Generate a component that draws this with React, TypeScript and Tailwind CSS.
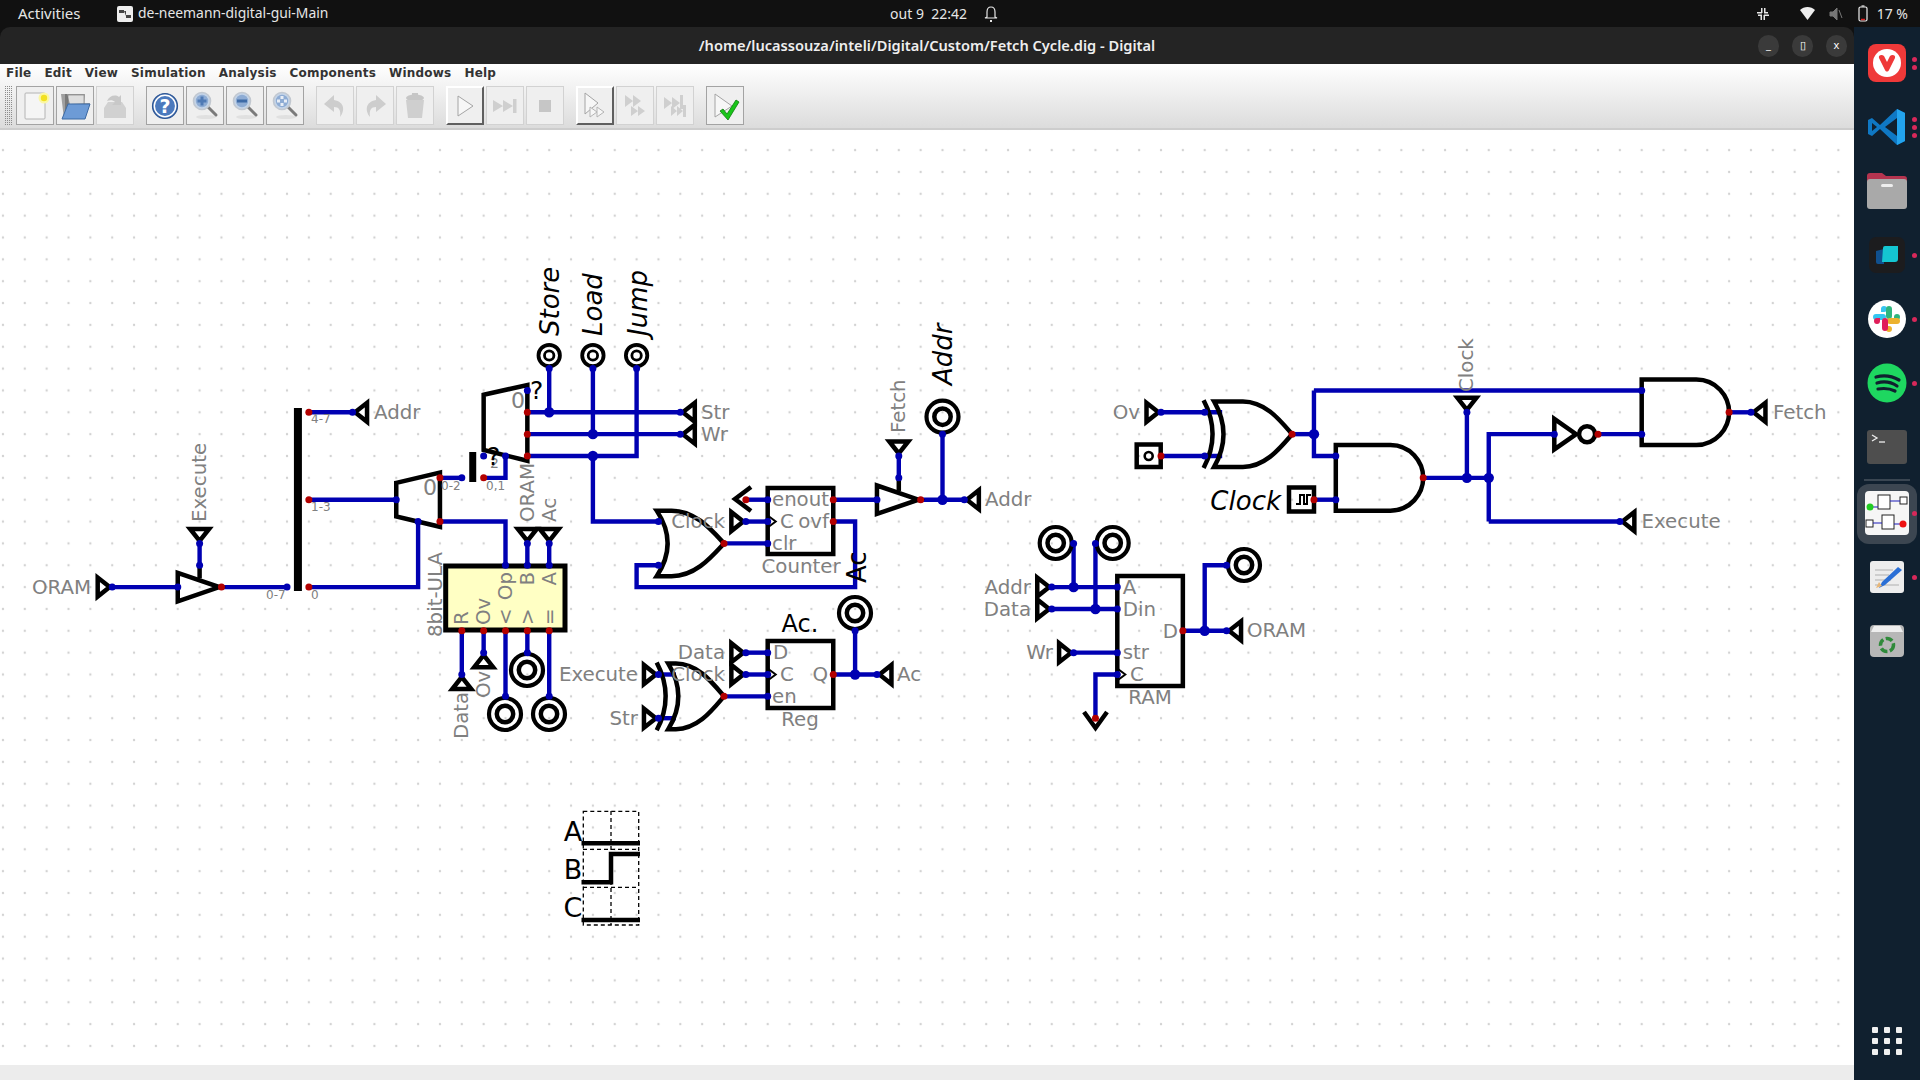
import React from "react";

const G = 21.85;
const X = (c: number) => 767.7 + G * c;
const Y = (r: number) => 412.3 + G * r;
const BLUE = "#0000b2";
const RED = "#b20000";
const GRAY = "#808080";

// wires in grid units
const wires: number[][][] = [
  [[-30, 8], [-27, 8]],
  [[-26, 7], [-26, 6]],
  [[-25, 8], [-22, 8]],
  [[-21, 0], [-19, 0]],
  [[-21, 4], [-17, 4]],
  [[-21, 8], [-16, 8], [-16, 5]],
  [[-15, 3], [-14, 3]],
  [[-13, 3], [-12, 3], [-12, 2]],
  [[-15, 5], [-12, 5], [-12, 7]],
  [[-11, 6], [-11, 7]],
  [[-10, 6], [-10, 7]],
  [[-14, 10], [-14, 12]],
  [[-13, 10], [-13, 11]],
  [[-12, 10], [-12, 13]],
  [[-11, 10], [-11, 11]],
  [[-10, 10], [-10, 13]],
  [[-11, 0], [-4, 0]],
  [[-11, 1], [-4, 1]],
  [[-11, 2], [-6, 2], [-6, -2]],
  [[-10, -2], [-10, 0]],
  [[-8, -2], [-8, 1]],
  [[-8, 2], [-8, 5], [-5, 5]],
  [[-5, 7], [-6, 7], [-6, 8], [4, 8], [4, 5], [3, 5]],
  [[-1, 4], [0, 4]],
  [[-1, 5], [0, 5]],
  [[-2, 6], [0, 6]],
  [[3, 4], [5, 4]],
  [[6, 2], [6, 3]],
  [[7, 4], [9, 4]],
  [[8, 1], [8, 4]],
  [[-1, 11], [0, 11]],
  [[-1, 12], [0, 12]],
  [[-5, 12], [-4.2, 12]],
  [[-5, 14], [-4.2, 14]],
  [[-2, 13], [0, 13]],
  [[3, 12], [5, 12]],
  [[4, 10], [4, 12]],
  [[18, 0], [20.8, 0]],
  [[18, 2], [20.8, 2]],
  [[24, 1], [25, 1]],
  [[25, -1], [25, 2], [26, 2]],
  [[25, -1], [40, -1]],
  [[25, 4], [26, 4]],
  [[30, 3], [33, 3]],
  [[32, 0], [32, 3]],
  [[33, 5], [33, 1], [36, 1]],
  [[33, 5], [39, 5]],
  [[38, 1], [40, 1]],
  [[44, 0], [45, 0]],
  [[13, 8], [16, 8]],
  [[13, 9], [16, 9]],
  [[14, 11], [16, 11]],
  [[14, 6], [14, 8]],
  [[15, 6], [15, 9]],
  [[16, 12], [15, 12], [15, 14]],
  [[19, 10], [21, 10]],
  [[20, 10], [20, 7], [21, 7]],
];

const bluePins = [
  [-30, 8], [-27, 8], [-26, 7], [-26, 6], [-22, 8], [-19, 0], [-17, 4], [-16, 5], [-14, 3], [-13, 2], [-12, 2], [-12, 7], [-11, 7], [-10, 7], [-11, 6], [-10, 6],
  [-14, 12], [-13, 11], [-12, 13], [-11, 11], [-10, 13], [-11, -1], [-10, -2], [-8, -2], [-6, -2], [-4, 0], [-4, 1], [-5, 5], [-5, 7], [-1, 5], [0, 4], [0, 5], [0, 6],
  [5, 4], [6, 3], [6, 2], [9, 4], [8, 1], [-1, 11], [-1, 12], [0, 11], [0, 12], [0, 13], [-5, 12], [-5, 14], [5, 12], [4, 10],
  [18, 0], [20, 0], [20, 2], [26, 2], [26, 4], [32, 0], [36, 1], [39, 5], [40, -1], [40, 1], [45, 0],
  [13, 8], [13, 9], [14, 11], [16, 8], [16, 9], [16, 11], [16, 12], [14, 6], [15, 6], [21, 10], [21, 7],
];
const redPins = [
  [-25, 8], [-21, 0], [-21, 4], [-21, 8], [-15, 3], [-15, 5], [-13, 3], [-11, 0], [-11, 1], [-11, 2],
  [-14, 10], [-13, 10], [-12, 10], [-11, 10], [-10, 10], [-1, 4], [-2, 6], [3, 4], [3, 5], [7, 4], [-2, 13], [3, 12],
  [18, 2], [24, 1], [25, 4], [30, 3], [38, 1], [44, 0], [15, 14], [19, 10],
];
const junctions = [[-10, 0], [-8, 1], [-8, 2], [8, 4], [4, 12], [25, 1], [32, 3], [33, 3], [14, 8], [15, 9], [20, 10]];

type Dir = "r" | "l" | "d" | "u";
const tris: [number, number, Dir][] = [
  [-30, 8, "r"], [-26, 6, "d"], [-19, 0, "l"], [-11, 6, "d"], [-10, 6, "d"], [-14, 12, "u"], [-13, 11, "u"],
  [-4, 0, "l"], [-4, 1, "l"], [-1, 5, "r"], [6, 2, "d"], [9, 4, "l"], [-1, 11, "r"], [-1, 12, "r"], [-5, 12, "r"], [-5, 14, "r"], [5, 12, "l"],
  [18, 0, "r"], [32, 0, "d"], [39, 5, "l"], [45, 0, "l"], [13, 8, "r"], [13, 9, "r"], [14, 11, "r"], [21, 10, "l"],
];

function triPoints(c: number, r: number, d: Dir) {
  const x = X(c), y = Y(r);
  const a = 2.5, b = 14.5, h = 9.5;
  const pts: Record<Dir, number[][]> = {
    r: [[x - a, y], [x - b, y - h], [x - b, y + h]],
    l: [[x + a, y], [x + b, y - h], [x + b, y + h]],
    d: [[x, y - a], [x - h, y - b], [x + h, y - b]],
    u: [[x, y + a], [x - h, y + b], [x + h, y + b]],
  };
  return pts[d].map((p) => p.join(",")).join(" ");
}

// or-shaped body, grid units
function orPath(left: number, flat: number, tip: number, r: number, sag: number) {
  const w = tip - flat;
  return `M${X(left)} ${Y(r - 1.5)} L${X(flat)} ${Y(r - 1.5)} C${X(flat + w * 0.45)} ${Y(r - 1.5)} ${X(tip - w * 0.25)} ${Y(r - 0.65)} ${X(tip)} ${Y(r)} C${X(tip - w * 0.25)} ${Y(r + 0.65)} ${X(flat + w * 0.45)} ${Y(r + 1.5)} ${X(flat)} ${Y(r + 1.5)} L${X(left)} ${Y(r + 1.5)} Q${X(left + sag * 2)} ${Y(r)} ${X(left)} ${Y(r - 1.5)} Z`;
}
function backArc(left: number, r: number, sag: number) {
  return `M${X(left)} ${Y(r - 1.55)} Q${X(left + sag * 2)} ${Y(r)} ${X(left)} ${Y(r + 1.55)}`;
}
function andPath(c: number, r: number) {
  return `M${X(c)} ${Y(r - 1.5)} L${X(c + 2.5)} ${Y(r - 1.5)} C${X(c + 3.4)} ${Y(r - 1.5)} ${X(c + 4)} ${Y(r - 0.75)} ${X(c + 4)} ${Y(r)} C${X(c + 4)} ${Y(r + 0.75)} ${X(c + 3.4)} ${Y(r + 1.5)} ${X(c + 2.5)} ${Y(r + 1.5)} L${X(c)} ${Y(r + 1.5)} Z`;
}
const poly = (pts: number[][]) => pts.map(([c, r]) => `${X(c)},${Y(r)}`).join(" ");

type Lb = { t: string; x: number; y: number; a?: "start" | "middle" | "end"; rot?: boolean; s?: number; c?: string; i?: boolean };
const labels: Lb[] = [
  { t: "ORAM", x: 91, y: 587, a: "end" },
  { t: "Addr", x: 374, y: 412 },
  { t: "Execute", x: 199.6, y: 522, rot: true },
  { t: "ORAM", x: 527, y: 522, rot: true },
  { t: "Ac", x: 549, y: 522, rot: true },
  { t: "8bit-ULA", x: 435, y: 637, rot: true },
  { t: "Op", x: 505, y: 572, rot: true, a: "end" },
  { t: "B", x: 527, y: 572, rot: true, a: "end" },
  { t: "A", x: 549, y: 572, rot: true, a: "end" },
  { t: "R", x: 461, y: 625, rot: true },
  { t: "Ov", x: 483.5, y: 625, rot: true },
  { t: "<", x: 505, y: 625, rot: true },
  { t: ">", x: 527, y: 625, rot: true },
  { t: "=", x: 549, y: 625, rot: true },
  { t: "Data", x: 461, y: 739, rot: true },
  { t: "Ov", x: 483.5, y: 698, rot: true },
  { t: "Execute", x: 638, y: 674, a: "end" },
  { t: "Str", x: 638, y: 718, a: "end" },
  { t: "Data", x: 725, y: 652, a: "end" },
  { t: "Clock", x: 725, y: 674, a: "end" },
  { t: "Clock", x: 725, y: 521, a: "end" },
  { t: "en", x: 772, y: 499 },
  { t: "out", x: 829, y: 499, a: "end" },
  { t: "C", x: 780, y: 521 },
  { t: "ovf", x: 829, y: 521, a: "end" },
  { t: "clr", x: 772, y: 543 },
  { t: "Counter", x: 801, y: 566, a: "middle" },
  { t: "D", x: 773, y: 652 },
  { t: "C", x: 780, y: 674 },
  { t: "en", x: 772, y: 696 },
  { t: "Q", x: 828, y: 674, a: "end" },
  { t: "Reg", x: 800, y: 719, a: "middle" },
  { t: "Str", x: 701, y: 412 },
  { t: "Wr", x: 701, y: 434 },
  { t: "Addr", x: 985, y: 499 },
  { t: "Ac", x: 897, y: 674 },
  { t: "Fetch", x: 898, y: 433, rot: true },
  { t: "Ov", x: 1140, y: 412, a: "end" },
  { t: "Addr", x: 1031, y: 587, a: "end" },
  { t: "Data", x: 1031, y: 609, a: "end" },
  { t: "Wr", x: 1053, y: 652, a: "end" },
  { t: "A", x: 1122.7, y: 587 },
  { t: "Din", x: 1122.7, y: 609 },
  { t: "str", x: 1122.7, y: 652 },
  { t: "C", x: 1130, y: 674 },
  { t: "D", x: 1178, y: 631, a: "end" },
  { t: "RAM", x: 1150, y: 697, a: "middle" },
  { t: "ORAM", x: 1247, y: 630 },
  { t: "Fetch", x: 1773, y: 412 },
  { t: "Execute", x: 1641.5, y: 521 },
  { t: "Clock", x: 1466, y: 392, rot: true },
  { t: "0", x: 430, y: 487, a: "middle", s: 22 },
  { t: "0", x: 518, y: 400, a: "middle", s: 22 },
  { t: "2", x: 490, y: 463, s: 14 },
  { t: "0-2", x: 441, y: 486, s: 12 },
  { t: "0,1", x: 486, y: 486, s: 12 },
  { t: "4-7", x: 311, y: 419, s: 12 },
  { t: "1-3", x: 311, y: 507, s: 12 },
  { t: "0-7", x: 266, y: 595, s: 12 },
  { t: "0", x: 311, y: 595, s: 12 },
  // black labels
  { t: "Store", x: 550, y: 336, rot: true, s: 26, c: "#000", i: true },
  { t: "Load", x: 592.5, y: 336, rot: true, s: 26, c: "#000", i: true },
  { t: "Jump", x: 638, y: 336, rot: true, s: 26, c: "#000", i: true },
  { t: "Addr", x: 943, y: 385, rot: true, s: 26, c: "#000", i: true },
  { t: "Clock", x: 1281, y: 501, a: "end", s: 26, c: "#000", i: true },
  { t: "Ac", x: 856.7, y: 583, rot: true, s: 26, c: "#000" },
  { t: "Ac.", x: 800, y: 624, a: "middle", s: 24, c: "#000" },
  { t: "?", x: 530, y: 390, s: 25, c: "#000" },
  { t: "?", x: 487, y: 456, s: 25, c: "#000" },
  { t: "A", x: 573, y: 831, a: "middle", s: 27, c: "#000" },
  { t: "B", x: 573, y: 869, a: "middle", s: 27, c: "#000" },
  { t: "C", x: 573, y: 907, a: "middle", s: 27, c: "#000" },
];

const smallProbes = [[-10, -2.6], [-8, -2.6], [-6, -2.6]];
const bigProbes: number[][] = [[942.5, 416.7], [855, 613], [505, 714], [527, 670], [549, 714], [1055.7, 543], [1112.7, 543], [1244, 565]];

function Circuit() {
  return (
    <svg viewBox="0 130 1854 935" className="absolute inset-0 h-full w-full" style={{ fontFamily: '"DejaVu Sans", sans-serif' }}>
      <defs>
        <pattern id="griddots" patternUnits="userSpaceOnUse" x={X(0) - 2} y={Y(0) - 2} width={G} height={G}>
          <circle cx="2" cy="2" r="1.2" fill="#d2d2d2" />
        </pattern>
      </defs>
      <rect x="0" y="130" width="1854" height="935" fill="url(#griddots)" />

      {/* yellow alu body */}
      <rect x={445.7} y={566} width={119.3} height={64} fill="#ffffc4" stroke="#000" strokeWidth="5" />

      {/* wires */}
      <g fill="none" stroke={BLUE} strokeWidth="4.4">
        {wires.map((w, i) => (
          <polyline key={i} points={poly(w)} />
        ))}
      </g>

      <g fill="none" stroke="#000" strokeWidth="4.5">
        {/* splitters */}
        <line x1={X(-21.5)} y1={408} x2={X(-21.5)} y2={591} strokeWidth="8" />
        <line x1={X(-13.5)} y1={452} x2={X(-13.5)} y2={482} strokeWidth="7" />
        {/* mux and demux */}
        <polygon points={poly([[-17, 3.23], [-15, 2.76], [-15, 5.24], [-17, 4.77]])} />
        <polygon points={poly([[-13, -0.8], [-11, -1.25], [-11, 2.22], [-13, 1.72]])} />
        {/* drivers */}
        <polygon points={poly([[-27, 7.35], [-25.1, 8], [-27, 8.65]])} />
        <line x1={X(-26)} y1={Y(7)} x2={X(-26)} y2={Y(7.6)} />
        <polygon points={poly([[5, 3.35], [6.9, 4], [5, 4.65]])} />
        <line x1={X(6)} y1={Y(3)} x2={X(6)} y2={Y(3.6)} />
        {/* gates */}
        <path d={orPath(-5.08, -4.4, -2, 6, 0.5)} />
        <path d={orPath(-4.55, -4.2, -2, 13, 0.46)} />
        <path d={backArc(-5.08, 13, 0.41)} />
        <path d={orPath(20.43, 21.75, 24, 1, 0.43)} />
        <path d={backArc(19.95, 1, 0.41)} />
        <path d={andPath(26, 3)} />
        <path d={andPath(40, 0)} />
        {/* not */}
        <polygon points={poly([[36, 0.3], [37, 1], [36, 1.7]])} />
        <circle cx={X(37.5)} cy={Y(1)} r="8" />
        {/* boxes */}
        <rect x={X(0)} y={488} width={X(3) - X(0)} height={66} />
        <rect x={X(0)} y={641} width={X(3) - X(0)} height={67} />
        <rect x={X(16)} y={576} width={X(19) - X(16)} height={110} />
        <rect x={1136.7} y={444.5} width={24} height={22.5} />
        <rect x={1289} y={487.5} width={25} height={24} />
        {/* tunnels */}
        <polyline points={`751,487 735,499 751,511`} />
        <polyline points={`1084,712 1095.5,728 1107,712`} />
        {tris.map(([c, r, d], i) => (
          <polygon key={i} points={triPoints(c, r, d)} />
        ))}
        {smallProbes.map(([c, r], i) => (
          <g key={i}>
            <circle cx={X(c)} cy={Y(r)} r="10.7" strokeWidth="3.8" />
            <circle cx={X(c)} cy={Y(r)} r="4.7" strokeWidth="2.8" />
          </g>
        ))}
        {bigProbes.map(([x, y], i) => (
          <g key={i}>
            <circle cx={x} cy={y} r="16" strokeWidth="4.2" />
            <circle cx={x} cy={y} r="8.2" strokeWidth="4.5" />
          </g>
        ))}
        <circle cx={1148.7} cy={456} r="4" strokeWidth="2.6" />
        <polyline points="1296,504 1300,504 1300,495 1304,495 1304,504 1307,504 1307,495 1311,495" strokeWidth="2" />
        {/* clock notches */}
        <g strokeWidth="2">
          <polyline points={`${X(0)},${Y(5) - 6} ${X(0) + 8},${Y(5)} ${X(0)},${Y(5) + 6}`} />
          <polyline points={`${X(0)},${Y(12) - 6} ${X(0) + 8},${Y(12)} ${X(0)},${Y(12) + 6}`} />
          <polyline points={`${X(16)},${Y(12) - 6} ${X(16) + 8},${Y(12)} ${X(16)},${Y(12) + 6}`} />
        </g>
      </g>

      {/* pins */}
      {bluePins.map(([c, r], i) => (
        <circle key={i} cx={X(c)} cy={Y(r)} r="3.5" fill={BLUE} />
      ))}
      {redPins.map(([c, r], i) => (
        <circle key={i} cx={X(c)} cy={Y(r)} r="3.5" fill={RED} />
      ))}
      {junctions.map(([c, r], i) => (
        <circle key={i} cx={X(c)} cy={Y(r)} r="5.2" fill={BLUE} />
      ))}

      {/* measurement graph */}
      <g fill="none" stroke="#000" strokeWidth="1.3" strokeDasharray="4 3">
        <rect x={583.3} y={811.3} width={55.4} height={113.7} />
        <line x1={611} y1={811} x2={611} y2={925} />
        <line x1={583} y1={849.3} x2={639} y2={849.3} />
        <line x1={583} y1={887.3} x2={639} y2={887.3} />
      </g>
      <g fill="none" stroke="#000" strokeWidth="4.5">
        <line x1={581.5} y1={843.3} x2={640} y2={843.3} />
        <polyline points="581.5,882.3 611,882.3 611,854 640,854" />
        <line x1={581.5} y1={920} x2={640} y2={920} />
      </g>

      {labels.map((l, i) => (
        <text
          key={i}
          x={l.x}
          y={l.y}
          textAnchor={l.a ?? "start"}
          dominantBaseline="central"
          fontSize={l.s ?? 19.8}
          fill={l.c ?? GRAY}
          fontStyle={l.i ? "oblique" : "normal"}
          transform={l.rot ? `rotate(-90 ${l.x} ${l.y})` : undefined}
        >
          {l.t}
        </text>
      ))}
    </svg>
  );
}

function ToolButton({ off, raised, children }: { off?: boolean; raised?: boolean; children: React.ReactNode }) {
  return (
    <div
      className={
        raised
          ? "flex h-[39px] w-[38px] items-center justify-center border-2 border-t-white border-l-white border-r-[#5f5f5f] border-b-[#5f5f5f] bg-[#efefef]"
          : off
            ? "flex h-[39px] w-[38px] items-center justify-center border border-[#d2d2d2] bg-[#efefef]"
            : "flex h-[39px] w-[38px] items-center justify-center border border-[#a3a3a3] bg-[#efefef]"
      }
    >
      {children}
    </div>
  );
}

const Ico = ({ children }: { children: React.ReactNode }) => (
  <svg width="32" height="32" viewBox="0 0 32 32">
    {children}
  </svg>
);

const Magnifier = ({ kind }: { kind: "plus" | "minus" | "fit" }) => (
  <Ico>
    <ellipse cx="17" cy="27" rx="10" ry="2" fill="#e0e0e0" />
    <line x1="19" y1="17" x2="27" y2="25" stroke="#7a7a7a" strokeWidth="3" strokeLinecap="round" />
    <circle cx="13" cy="11" r="8.5" fill="#c4d4e8" stroke="#c2c8d0" strokeWidth="1.6" />
    <circle cx="13" cy="11" r="6.2" fill="#8eacd4" />
    {kind === "plus" && <path d="M13 6.5v9M8.5 11h9" stroke="#4f7ab5" strokeWidth="3" />}
    {kind === "minus" && <path d="M8 11h10" stroke="#3d6aa6" strokeWidth="3" />}
    {kind === "fit" && <path d="M13 6v3M13 13v3M8 11h3M15 11h3" stroke="#e8eef6" strokeWidth="3" />}
  </Ico>
);

function Toolbar() {
  return (
    <div className="flex items-center pl-[5px]">
      <svg width="8" height="39" className="mr-[3px]">
        <defs>
          <pattern id="grip" patternUnits="userSpaceOnUse" width="2" height="2">
            <rect width="1" height="1" fill="#8c8c8c" />
          </pattern>
        </defs>
        <rect width="8" height="39" fill="url(#grip)" />
      </svg>
      <div className="flex gap-[2px]">
        <ToolButton>
          <Ico>
            <rect x="6" y="3" width="20" height="26" rx="1" fill="#f5f5f5" stroke="#b4b4b4" />
            <circle cx="25" cy="8" r="5.5" fill="#fbf7a2" />
            <circle cx="25" cy="8" r="3.2" fill="#f2e020" />
          </Ico>
        </ToolButton>
        <ToolButton>
          <Ico>
            <path d="M6 4h20l-1 16H6z" fill="#9a9a9a" />
            <path d="M9 5h16v12H9z" fill="#dedede" stroke="#888" strokeWidth="0.7" />
            <path d="M2 4h6l3 10 20-1-5 16H5z" fill="#5e5e5e" opacity="0.55" />
            <path d="M9 14h22l-5 15H3z" fill="#6d9bd6" stroke="#3d6aa4" />
          </Ico>
        </ToolButton>
        <ToolButton off>
          <Ico>
            <path d="M5 18l4-6h14l4 6v10H5z" fill="#d1d1d1" />
            <path d="M8 11c2-5 8-7 12-4l2-2v10h-9l3-3c-2-2-5-2-8-1z" fill="#c8c8c8" />
          </Ico>
        </ToolButton>
      </div>
      <div className="ml-[12px] flex gap-[2px]">
        <ToolButton>
          <Ico>
            <circle cx="16" cy="16" r="12.5" fill="#3c68ad" stroke="#2b5594" strokeWidth="1.2" />
            <circle cx="16" cy="16" r="10.7" fill="#4a79bd" stroke="#fff" strokeWidth="1.5" />
            <text x="16" y="23" textAnchor="middle" fontSize="19" fontWeight="700" fill="#fff" fontFamily='"DejaVu Sans", sans-serif'>
              ?
            </text>
          </Ico>
        </ToolButton>
        <ToolButton>
          <Magnifier kind="plus" />
        </ToolButton>
        <ToolButton>
          <Magnifier kind="minus" />
        </ToolButton>
        <ToolButton>
          <Magnifier kind="fit" />
        </ToolButton>
      </div>
      <div className="ml-[12px] flex gap-[2px]">
        <ToolButton off>
          <Ico>
            <path d="M15 5L5 14l10 8v-5c5 0 7 3 6 10 5-6 5-15-6-17z" fill="#cdcdcd" />
          </Ico>
        </ToolButton>
        <ToolButton off>
          <Ico>
            <path d="M17 5l10 9-10 8v-5c-5 0-7 3-6 10-5-6-5-15 6-17z" fill="#cdcdcd" />
          </Ico>
        </ToolButton>
        <ToolButton off>
          <Ico>
            <ellipse cx="16" cy="8" rx="9" ry="3.5" fill="#c6c6c6" />
            <rect x="13" y="3" width="6" height="3" fill="#c6c6c6" />
            <path d="M7 10h18l-2 18H9z" fill="#cfcfcf" />
          </Ico>
        </ToolButton>
      </div>
      <div className="ml-[12px] flex gap-[2px]">
        <ToolButton raised>
          <Ico>
            <path d="M9 6l15 10L9 26z" fill="#f7f7f7" stroke="#a4a4a4" />
          </Ico>
        </ToolButton>
        <ToolButton off>
          <Ico>
            <path d="M4 10l10 6-10 6zM14 10l10 6-10 6z" fill="#cfcfcf" />
            <rect x="24" y="9" width="3.5" height="14" fill="#cfcfcf" />
          </Ico>
        </ToolButton>
        <ToolButton off>
          <Ico>
            <rect x="10" y="10" width="12" height="12" fill="#c6c6c6" />
          </Ico>
        </ToolButton>
      </div>
      <div className="ml-[12px] flex gap-[2px]">
        <ToolButton raised>
          <Ico>
            <path d="M6 3l13 10L6 24z" fill="#f7f7f7" stroke="#a4a4a4" />
            <path d="M11 17l7 5-7 5zM18 17l7 5-7 5z" fill="#f7f7f7" stroke="#b4b4b4" />
          </Ico>
        </ToolButton>
        <ToolButton off>
          <Ico>
            <path d="M6 5l8 6-8 6zM14 5l8 6-8 6z" fill="#cfcfcf" />
            <path d="M12 16l7 5-7 5zM19 16l7 5-7 5z" fill="#cfcfcf" />
          </Ico>
        </ToolButton>
        <ToolButton off>
          <Ico>
            <path d="M5 7l8 6-8 6zM13 7l8 6-8 6z" fill="#cfcfcf" />
            <rect x="21" y="5" width="3" height="14" fill="#cfcfcf" />
            <path d="M12 16l6 5-6 5zM18 16l6 5-6 5z" fill="#cfcfcf" />
            <rect x="24" y="15" width="3" height="12" fill="#cfcfcf" />
          </Ico>
        </ToolButton>
      </div>
      <div className="ml-[12px]">
        <ToolButton>
          <Ico>
            <path d="M6 4l17 12L6 27z" fill="#f7f7f7" stroke="#a4a4a4" />
            <path d="M11 21l3-2 4 5 9-14 3 2-11 18z" fill="#19c519" stroke="#0b7d0b" strokeWidth="0.8" />
          </Ico>
        </ToolButton>
      </div>
    </div>
  );
}

function DockSlot({ dots = 0, active, children }: { dots?: number; active?: boolean; children: React.ReactNode }) {
  return (
    <div className="relative flex h-[64px] w-full items-center justify-center">
      {active && <div className="absolute left-[3px] top-[3px] h-[60px] w-[60px] rounded-xl bg-[#3c4651]" />}
      <div className="relative">{children}</div>
      {dots > 0 && (
        <div className="absolute right-[3px] top-0 flex h-full flex-col justify-center gap-[3px]">
          {Array.from({ length: dots }).map((_, i) => (
            <div key={i} className="h-[5px] w-[5px] rounded-full bg-[#d8285a]" />
          ))}
        </div>
      )}
    </div>
  );
}

function Dock() {
  return (
    <div className="flex h-full w-[66px] flex-col bg-[#10202f] pt-[4px]">
      <DockSlot dots={2}>
        <svg width="40" height="40" viewBox="0 0 40 40">
          <rect x="1" y="1" width="38" height="38" rx="8" fill="#ef3939" />
          <circle cx="20" cy="20" r="14" fill="#fff" />
          <path d="M12 15c-1-3 3-4 5-2l3 6 3-6c2-2 6-1 5 2l-6 12c-1 2-3 2-4 0z" fill="#ef3939" />
        </svg>
      </DockSlot>
      <DockSlot dots={3}>
        <svg width="40" height="40" viewBox="0 0 40 40">
          <path d="M30 2l8 4v28l-8 4L13 22l-8 7-4-2v-14l4-2 8 7z" fill="#0f78c4" />
          <path d="M30 2l8 4v28l-8 4z" fill="#23a4ee" />
          <path d="M30 11v18l-12-9z" fill="#10202f" />
          <path d="M5 16l5 4-5 4z" fill="#10202f" />
        </svg>
      </DockSlot>
      <DockSlot>
        <svg width="42" height="40" viewBox="0 0 42 40">
          <path d="M1 5a3 3 0 013-3h12l4 3h18a3 3 0 013 3v10H1z" fill="#b5344f" />
          <rect x="1" y="8" width="40" height="30" rx="3" fill="#a9a9a9" />
          <rect x="15" y="13" width="12" height="3" rx="1.5" fill="#eee" />
        </svg>
      </DockSlot>
      <DockSlot dots={1}>
        <svg width="36" height="36" viewBox="0 0 36 36">
          <rect width="36" height="36" rx="7" fill="#1c1c1e" />
          <path d="M7 14l8-2v15H9a2 2 0 01-2-2z" fill="#10508e" />
          <path d="M14 11a2 2 0 012-2h13v13a3 3 0 01-3 3H13z" fill="#14c6d2" />
        </svg>
      </DockSlot>
      <DockSlot dots={1}>
        <svg width="38" height="38" viewBox="0 0 38 38">
          <ellipse cx="19" cy="19" rx="19" ry="19" fill="#fff" />
          <path d="M16 6a3 3 0 010 6h-3V9a3 3 0 013-3zM15 14H8a3 3 0 000 6h7a3 3 0 000-6z" fill="#35c5f0" />
          <path d="M32 17a3 3 0 00-6 0v3h3a3 3 0 003-3zM24 9a3 3 0 00-6 0v7a3 3 0 006 0z" fill="#2eb67d" />
          <path d="M21 32a3 3 0 000-6h-3v3a3 3 0 003 3zM22 24h7a3 3 0 000-6h-7a3 3 0 000 6z" fill="#ecb22e" />
          <path d="M6 21a3 3 0 006 0v-3H9a3 3 0 00-3 3zM14 21v7a3 3 0 006 0v-7a3 3 0 00-6 0z" fill="#e01e5a" />
        </svg>
      </DockSlot>
      <DockSlot dots={1}>
        <svg width="40" height="40" viewBox="0 0 40 40">
          <circle cx="20" cy="20" r="19.5" fill="#1ed760" />
          <path d="M9 14c8-2 16-1 23 3M10 20c7-2 14-1 20 3M11 26c6-1 11-1 17 2" fill="none" stroke="#10202f" strokeWidth="3.2" strokeLinecap="round" />
        </svg>
      </DockSlot>
      <DockSlot>
        <svg width="40" height="34" viewBox="0 0 40 34">
          <rect width="40" height="34" rx="3" fill="#4e4e4e" />
          <path d="M5 5l5 3-5 3" fill="none" stroke="#eee" strokeWidth="1.3" />
          <path d="M12 12h6" stroke="#eee" strokeWidth="1.3" />
        </svg>
      </DockSlot>
      <div className="mx-[10px] h-[2px] bg-[#3a4652]" />
      <DockSlot active dots={1}>
        <svg width="44" height="44" viewBox="0 0 44 44">
          <rect width="44" height="44" rx="4" fill="#f6f6f6" />
          <g fill="#fff" stroke="#222" strokeWidth="1">
            <rect x="13" y="4" width="12" height="14" />
            <rect x="17" y="24" width="12" height="14" />
            <rect x="35" y="6" width="7" height="7" />
            <rect x="1" y="29" width="7" height="7" />
          </g>
          <path d="M4 16h9M25 10h10M8 32h9M29 33h7" stroke="#1a1ab8" strokeWidth="1.2" fill="none" />
          <circle cx="5" cy="16" r="3.5" fill="#22cc22" />
          <circle cx="38" cy="33" r="3.5" fill="#ee1111" />
        </svg>
      </DockSlot>
      <DockSlot dots={1}>
        <svg width="34" height="32" viewBox="0 0 34 32">
          <rect width="34" height="32" rx="3" fill="#ededed" />
          <path d="M5 9h18M5 14h14M5 19h16M5 24h24" stroke="#c4c4c4" strokeWidth="1.5" />
          <path d="M28 6l4 3-17 15-6 3 3-6z" fill="#2a6fd6" />
          <path d="M9 21l-3 6 6-2z" fill="#e7b678" />
        </svg>
      </DockSlot>
      <DockSlot>
        <svg width="34" height="32" viewBox="0 0 34 32">
          <rect width="34" height="32" rx="4" fill="#b7b7b7" />
          <path d="M4 1h26l3 6H1z" fill="#eeeeee" />
          <circle cx="17" cy="20" r="6.5" fill="none" stroke="#2f8a3a" strokeWidth="3.5" strokeDasharray="7 2.5" />
        </svg>
      </DockSlot>
      <div className="mt-auto mb-[25px] grid w-[33px] self-center grid-cols-3 gap-[5px] pl-[1px]">
        {Array.from({ length: 9 }).map((_, i) => (
          <div key={i} className="h-[6px] w-[6px] rounded-[1px] bg-[#f0f0f0]" />
        ))}
      </div>
    </div>
  );
}

function TopBar() {
  return (
    <div className="relative flex h-[27px] items-center bg-[#111111] text-[14px] text-[#e6e6e6]" style={{ fontFamily: '"Noto Sans", sans-serif' }}>
      <span className="ml-[18px] w-[63px] text-[15px]">Activities</span>
      <svg width="16" height="16" viewBox="0 0 16 16" className="ml-[36px]">
        <rect width="16" height="16" rx="2" fill="#eeeeee" />
        <path d="M2 4h5v3H2zM9 9h5v3H9zM7 5h2v5" fill="#444" />
      </svg>
      <span className="ml-[5px] text-[13.9px]">de-neemann-digital-gui-Main</span>
      <div className="ml-auto flex items-center">
        <span className="mr-[17px]">out 9&nbsp;&nbsp;22:42</span>
        <svg width="14" height="18" viewBox="0 0 14 18" fill="none" stroke="#e6e6e6" strokeWidth="1.2" className="mr-[922px]">
          <path d="M3 12V7c0-3 1.5-5 4-5s4 2 4 5v5l2 1H1z" />
          <path d="M6 16h2" strokeWidth="2" />
        </svg>
      </div>
      <div className="absolute right-0 top-0 flex h-full items-center">
        <svg width="14" height="14" viewBox="0 0 14 14" className="mr-[30px]" fill="#e6e6e6">
          <path d="M1 5h5v1.5H1zM8 7.5h5V9H8zM5 1h1.5v5H5zM7.5 8H9v5H7.5zM8 1h1.5v4H8zM8 5h4v1.5H8zM4.5 8H6v5H4.5zM2 7.5h4V9H2z" />
        </svg>
        <svg width="15" height="13" viewBox="0 0 15 13" className="mr-[14px]" fill="#eeeeee">
          <path d="M0 3c4-4 11-4 15 0l-7.5 10z" />
        </svg>
        <svg width="14" height="14" viewBox="0 0 14 14" className="mr-[15px]" fill="#777777">
          <path d="M1 5h3l4-4v12l-4-4H1zM10 3l3 8" stroke="#777" />
        </svg>
        <svg width="10" height="17" viewBox="0 0 10 17" className="mr-[9px]" fill="none" stroke="#eeeeee" strokeWidth="1.2">
          <rect x="1" y="2" width="8" height="14" rx="1.5" />
          <path d="M3.5 1h3" />
          <path d="M3 14.5h4" stroke="#d22" strokeWidth="1.5" />
        </svg>
        <span className="mr-[12px]">17 %</span>
      </div>
    </div>
  );
}

export default function App() {
  const menus = ["File", "Edit", "View", "Simulation", "Analysis", "Components", "Windows", "Help"];
  return (
    <div className="flex h-screen w-screen flex-col overflow-hidden bg-[#111111]">
      <TopBar />
      <div className="flex min-h-0 flex-1">
        <div className="flex min-w-0 flex-1 flex-col">
          <div className="flex h-[37px] items-center rounded-t-[10px] bg-[#242424]" style={{ fontFamily: '"Noto Sans", sans-serif' }}>
            <div className="flex-1 text-center text-[14.6px] font-semibold text-[#eeeeee]">
              /home/lucassouza/inteli/Digital/Custom/Fetch Cycle.dig - Digital
            </div>
            <div className="absolute right-[73px] flex gap-[13px]">
              {["_", "▯", "x"].map((b) => (
                <div key={b} className="flex h-[22px] w-[21px] items-center justify-center rounded-full bg-[#3a3a3a] text-[11px] text-white">
                  {b}
                </div>
              ))}
            </div>
          </div>
          <div className="h-[66px] border-b-2 border-[#cdcdcd] bg-gradient-to-b from-white to-[#dcdcdc]">
            <div className="flex h-[18px] items-center gap-[13px] pl-[6px] text-[12px] font-bold tracking-[0.2px] text-[#333333]" style={{ fontFamily: '"DejaVu Sans", sans-serif' }}>
              {menus.map((m) => (
                <span key={m}>{m}</span>
              ))}
            </div>
            <div className="mt-[4px]">
              <Toolbar />
            </div>
          </div>
          <div className="relative flex-1 bg-white">
            <Circuit />
          </div>
          <div className="h-[15px] bg-[#ececec]" />
        </div>
        <Dock />
      </div>
    </div>
  );
}
